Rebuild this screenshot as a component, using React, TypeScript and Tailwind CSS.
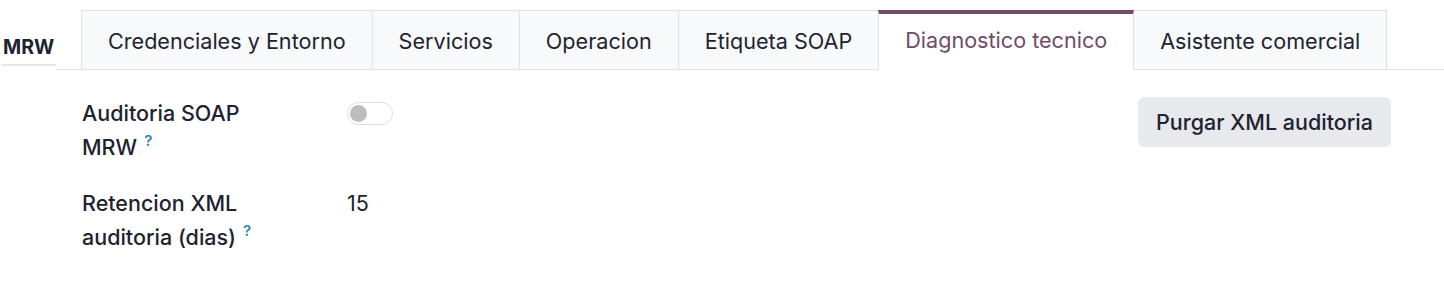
import React, { useState } from 'react';

const tabs = [
  'Credenciales y Entorno',
  'Servicios',
  'Operacion',
  'Etiqueta SOAP',
  'Diagnostico tecnico',
  'Asistente comercial',
];

const Help = () => (
  <span className="inline-block align-top ml-[7px] relative top-[3px] text-[15px] leading-[15px] font-semibold text-[#3186b6]">?</span>
);

export default function App() {
  const [active, setActive] = useState(4);
  const [audit, setAudit] = useState(false);

  return (
    <div className="w-full h-[308px] bg-white text-[#1d2330] font-['Inter','Noto_Sans',sans-serif]">
      {/* header: title + notebook tabs */}
      <div className="flex items-end pt-[10px]">
        <div className="ml-[2px] w-[54px] mb-[4px] h-[56px] flex items-end pb-[2px] border-b-2 border-[#e4e6ea]">
          <span className="text-[19.5px] font-bold pl-[1px]">MRW</span>
        </div>
        <div className="flex-1 flex border-b border-[#dee2e6] pl-[25px]">
          {tabs.map((t, i) => {
            const isActive = i === active;
            return (
              <button
                key={t}
                onClick={() => setActive(i)}
                className={
                  'h-[60px] px-[26px] text-[21.6px] border-x border-[#dee2e6] -mb-px ' +
                  (i > 0 ? '-ml-px ' : '') +
                  (isActive
                    ? 'bg-white text-[#714b67] border-t-4 border-t-[#714b67] pb-[2px] relative z-10 border-b border-b-white'
                    : 'bg-[#f8f9fa] border-t border-b border-b-[#dee2e6] pt-[2px]')
                }
              >
                {t}
              </button>
            );
          })}
        </div>
      </div>

      {/* form body */}
      <div className="flex pl-[82px] pr-[53px] pt-[26px]">
        <div className="flex-1 flex flex-col gap-[22px]">
          <div className="flex">
            <div className="w-[265px] pr-[50px] text-[21.5px] leading-[34px] font-medium">
              Auditoria SOAP MRW
              <Help />
            </div>
            <div className="h-[34px] flex items-center">
              <button
                onClick={() => setAudit(!audit)}
                className={
                  'w-[46px] h-[23px] rounded-full border flex items-center px-[2px] ' +
                  (audit ? 'bg-[#714b67] border-[#714b67] justify-end' : 'bg-white border-[#dcdcdc] justify-start')
                }
              >
                <span className={'w-[17px] h-[17px] rounded-full ' + (audit ? 'bg-white' : 'bg-[#bdbdbd]')} />
              </button>
            </div>
          </div>
          <div className="flex">
            <div className="w-[265px] pr-[50px] text-[21.5px] leading-[34px] font-medium">
              Retencion XML auditoria (dias)
              <Help />
            </div>
            <div className="text-[21.5px] leading-[34px]">15</div>
          </div>
        </div>
        <div className="pt-[1px]">
          <button className="h-[50px] px-[18px] rounded-[6px] bg-[#e7e9ed] text-[21.5px] font-medium">
            Purgar XML auditoria
          </button>
        </div>
      </div>
    </div>
  );
}
